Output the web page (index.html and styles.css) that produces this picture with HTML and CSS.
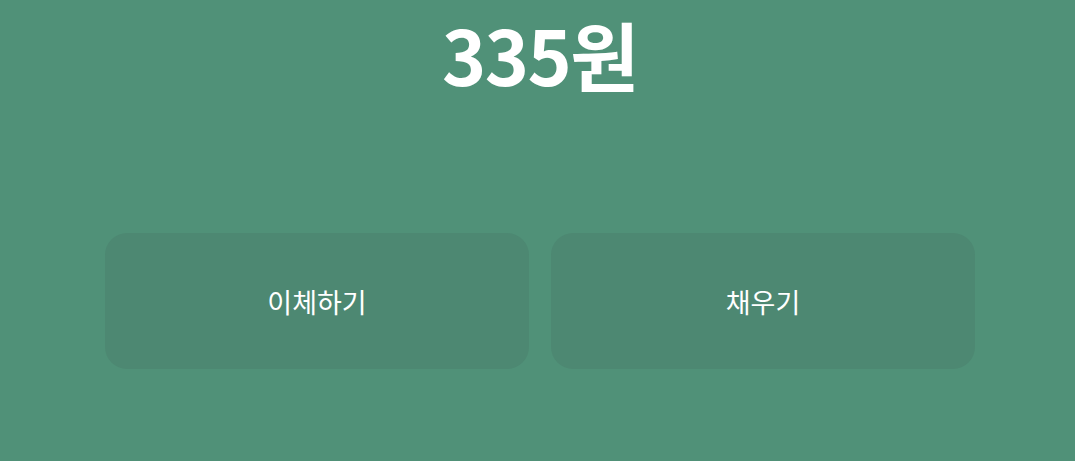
FILE: index.html
```html
<!DOCTYPE html>
<html lang="ko">
<head>
<meta charset="utf-8">
<link rel="stylesheet" href="styles.css">
</head>
<body>
<main class="page">
  <h1 class="balance">335원</h1>
  <div class="actions">
    <button class="action">이체하기</button>
    <button class="action">채우기</button>
  </div>
</main>
</body>
</html>
```
FILE: styles.css
```css
html, body {
  margin: 0;
  padding: 0;
  height: 100%;
}
body {
  background: #509178;
  font-family: "Noto Sans CJK KR", "Noto Sans", sans-serif;
  color: #ffffff;
}
.page {
  width: 870px;
  margin-left: 105px;
  display: flex;
  flex-direction: column;
  align-items: center;
}
.balance {
  margin: 0;
  font-size: 75px;
  font-weight: 700;
  line-height: 108px;
  letter-spacing: -1.5px;
}
.actions {
  margin-top: 125px;
  width: 100%;
  display: grid;
  grid-template-columns: 1fr 1fr;
  gap: 22px;
}
.action {
  height: 136px;
  border: none;
  border-radius: 22px;
  background: #4d8872;
  color: #ffffff;
  font-family: "Noto Sans CJK KR", "Noto Sans", sans-serif;
  font-size: 27px;
  font-weight: 400;
  padding: 0;
}
```
